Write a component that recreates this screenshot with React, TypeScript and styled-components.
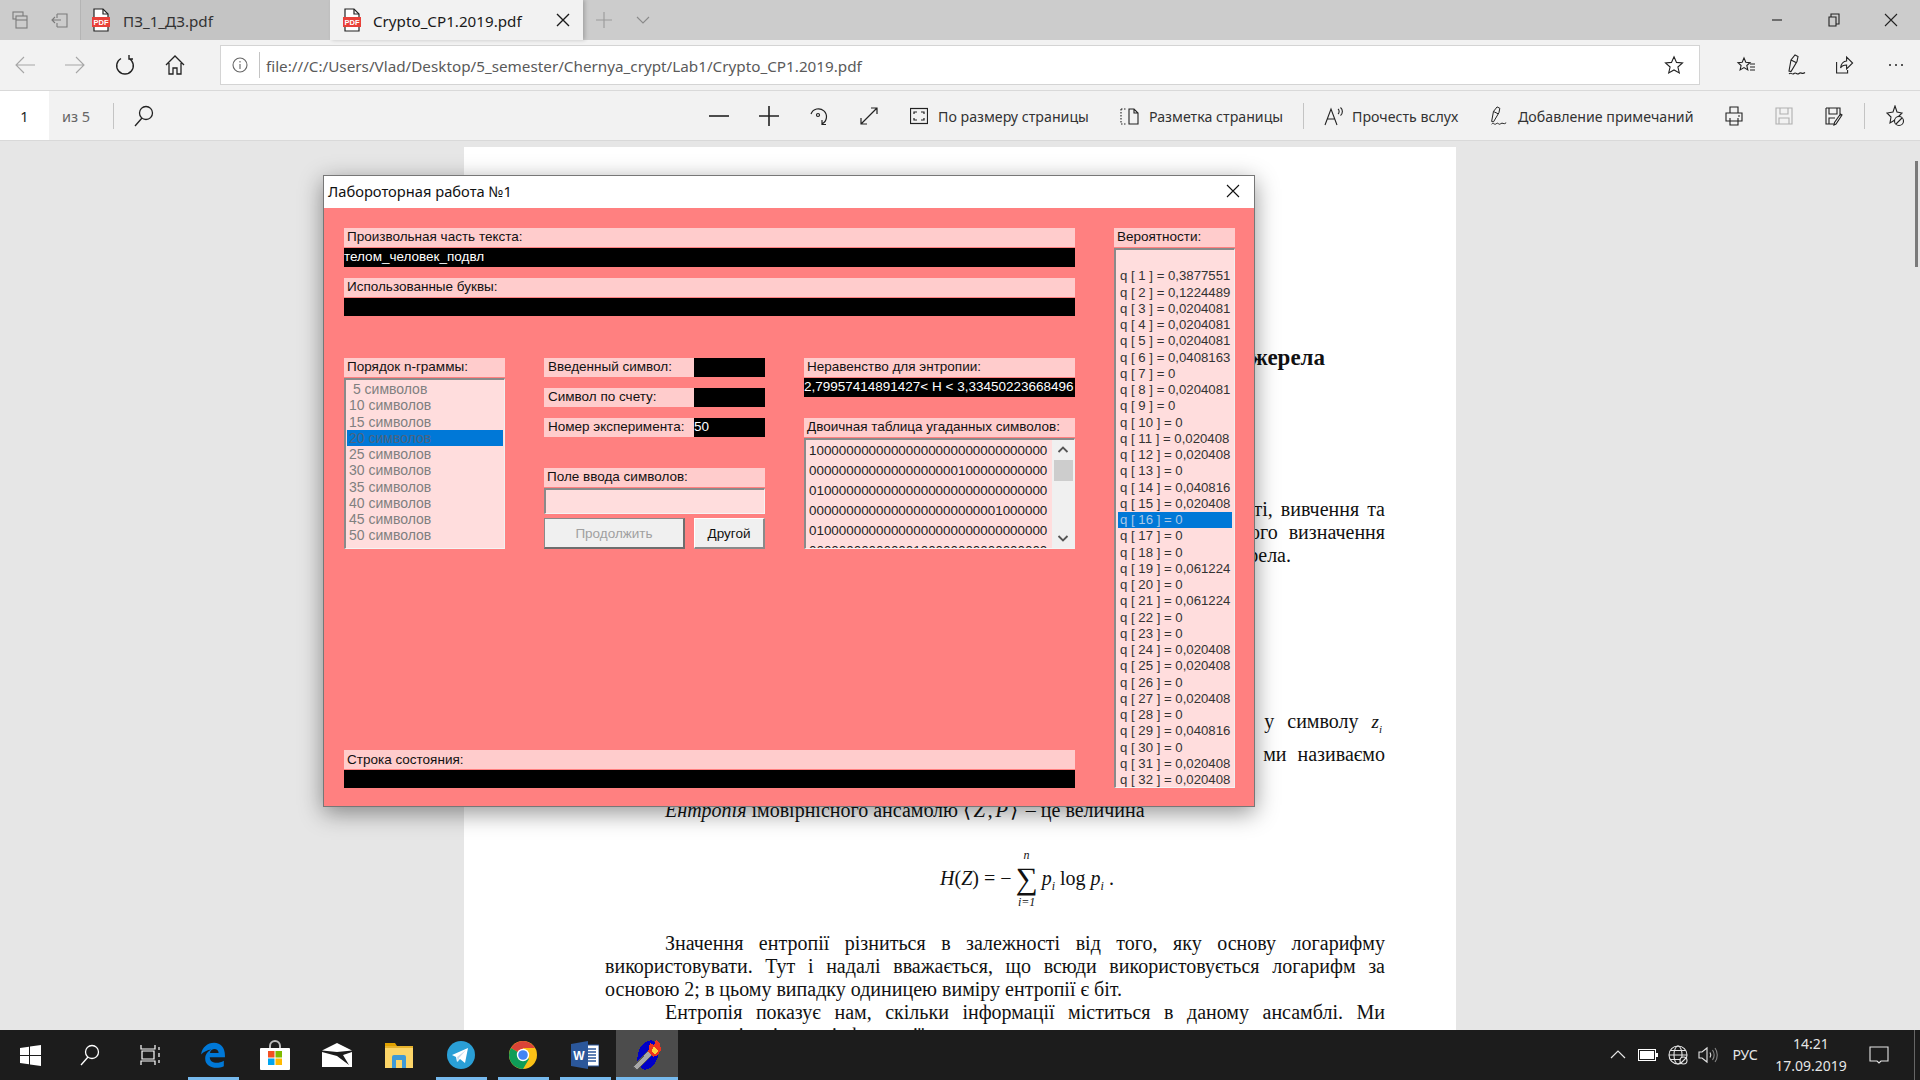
import React from "react";
import styled, { createGlobalStyle } from "styled-components";

const Global = createGlobalStyle`
  html, body { margin: 0; padding: 0; background: #e6e6e6; }
  * { box-sizing: border-box; }
  svg { display: block; }
`;

const ui = `"Noto Sans", "Open Sans", sans-serif`;
const legacy = `"Liberation Sans", Arial, sans-serif`;
const serif = `"Liberation Serif", "Times New Roman", serif`;

const Screen = styled.div`
  width: 1920px; height: 1080px; overflow: hidden;
  display: flex; flex-direction: column;
  font-family: ${ui}; color: #222;
`;

/* ---------- tab strip ---------- */
const TabStrip = styled.div`
  height: 40px; flex: none; display: flex; align-items: stretch; background: #cccccc; color: #444;
`;
const TabTools = styled.div`
  width: 81px; display: flex; padding-left: 0; border-right: 1px solid #b4b4b4;
`;
const Slot = styled.div<{ $w?: number; $ml?: number; $c?: string }>`
  width: ${p => p.$w ?? 50}px; flex: none; margin-left: ${p => p.$ml ?? 0}px;
  display: flex; align-items: center; justify-content: center;
  color: ${p => p.$c ?? "inherit"};
`;
const Tab = styled.div<{ $active?: boolean; $w: number }>`
  width: ${p => p.$w}px; flex: none; display: flex; align-items: center;
  padding-left: ${p => (p.$active ? 12 : 10)}px; gap: ${p => (p.$active ? 11 : 12)}px;
  background: ${p => (p.$active ? "#f2f2f2" : "#c4c4c4")};
  color: ${p => (p.$active ? "#1a1a1a" : "#333")};
  font-size: 15.2px; white-space: nowrap; position: relative;
  box-shadow: ${p => (p.$active ? "2px 0 4px rgba(0,0,0,.2)" : "none")};
`;
const TabName = styled.span<{ $w: number }>`
  width: ${p => p.$w}px; padding-top: 1px;
`;
const WindowControls = styled.div`
  margin-left: auto; display: flex; padding-right: 1px; color: #222;
`;

/* ---------- address row ---------- */
const AddressRow = styled.div`
  height: 51px; flex: none; display: flex; background: #f2f2f2; padding-top: 5px;
  border-bottom: 1px solid #d9d9d9; color: #222;
`;
const NavSlot = styled.div<{ $dim?: boolean; $ml?: number; $w?: number }>`
  width: ${p => p.$w ?? 50}px; height: 39px; flex: none; margin-left: ${p => p.$ml ?? 0}px;
  display: flex; align-items: center; justify-content: center;
  color: ${p => (p.$dim ? "#a6a6a6" : "#222")};
`;
const AddressBar = styled.div`
  width: 1480px; height: 40px; flex: none; margin-left: 20px; background: #fff;
  border: 1px solid #d4d4d4; display: flex; align-items: center;
`;
const InfoSlot = styled.div`
  width: 39px; height: 26px; flex: none; display: flex; align-items: center; justify-content: center;
  border-right: 1px solid #c4c4c4; color: #666; margin-right: 6px;
`;
const UrlText = styled.span`
  font-size: 15.25px; color: #5a5a5a; white-space: nowrap; padding-top: 1px;
`;
const StarSlot = styled.div`
  margin-left: auto; width: 51px; display: flex; justify-content: center; color: #222;
`;

/* ---------- pdf toolbar ---------- */
const PdfBar = styled.div`
  height: 50px; flex: none; display: flex; align-items: stretch; background: #f2f2f2;
  border-bottom: 1px solid #d9d9d9; color: #222;
`;
const PageBox = styled.div`
  width: 49px; background: #fff; display: flex; align-items: center; justify-content: center;
  font-size: 14.5px; color: #222;
`;
const PageCount = styled.div`
  width: 30px; margin-left: 13px; font-size: 14.5px; color: #666; display: flex; align-items: center;
  white-space: nowrap;
`;
const VSep = styled.div<{ $ml: number }>`
  width: 1px; height: 26px; align-self: center; margin-left: ${p => p.$ml}px; background: #c4c4c4; flex: none;
`;
const PdfRight = styled.div`
  margin-left: auto; display: flex; align-items: stretch;
`;
const ToolIcon = styled.div<{ $ml: number }>`
  width: 20px; flex: none; margin-left: ${p => p.$ml}px; display: flex; align-items: center; justify-content: center;
`;
const ToolLabel = styled.div<{ $w: number; $ml?: number }>`
  width: ${p => p.$w}px; margin-left: ${p => p.$ml ?? 8}px; flex: none; display: flex; align-items: center;
  font-size: 14.2px; white-space: nowrap; color: #333; padding-top: 1px;
`;

/* ---------- viewer + page ---------- */
const Viewer = styled.div`
  flex: 1; min-height: 0; position: relative; overflow: hidden; background: #e6e6e6;
`;
const ScrollThumb = styled.div`
  position: absolute; right: 2px; top: 20px; width: 3px; height: 106px; background: #7a7a7a;
`;
const Page = styled.div`
  width: 992px; height: 1000px; margin: 6px 0 0 464px; background: #fff; color: #111;
  font-family: ${serif}; font-size: 20px; line-height: 23px;
  padding: 198px 71px 0 141px;
`;
const Heading = styled.div`
  font-weight: 700; font-size: 23px; line-height: 26px; text-align: right; padding-right: 60px;
`;
const Fragment = styled.div<{ $mt?: number; $pr?: number; $ws?: number }>`
  text-align: right; margin-top: ${p => p.$mt ?? 0}px; padding-right: ${p => p.$pr ?? 0}px;
  word-spacing: ${p => p.$ws ?? 0}px;
  i { font-size: 19px; } sub { font-size: 11px; line-height: 0; }
`;
const Line = styled.div<{ $indent?: boolean; $mt?: number; $last?: boolean }>`
  margin-top: ${p => p.$mt ?? 0}px; padding-left: ${p => (p.$indent ? 60 : 0)}px;
  text-align: justify; text-align-last: ${p => (p.$last ? "left" : "justify")}; white-space: nowrap;
`;
const MathPair = styled.span`
  letter-spacing: 2.4px; font-size: 21px;
`;
const Formula = styled.div`
  height: 70px; margin-top: 21.5px; display: flex; align-items: center; justify-content: center;
  padding-left: 64px; font-size: 20px; gap: 3px; white-space: nowrap;
  i { font-style: italic; } sub { font-size: 12px; line-height: 0; }
`;
const SigmaStack = styled.div`
  display: flex; flex-direction: column; align-items: center; gap: 2px; line-height: 1; margin: 0 1px;
`;
const SigmaLimit = styled.span`
  font-size: 12px; line-height: 12px; font-style: italic;
`;
const Sigma = styled.span`
  font-size: 31px; line-height: 31px;
`;

/* ---------- dialog ---------- */
const Dialog = styled.div`
  position: absolute; left: 323px; top: 34px; width: 932px; height: 632px;
  border: 1px solid #777; background: #ff8080; display: flex; flex-direction: column;
  box-shadow: 0 6px 22px rgba(0,0,0,.42);
  font-family: ${legacy}; font-size: 13.5px;
`;
const TitleBar = styled.div`
  height: 32px; flex: none; background: #fff; display: flex; align-items: center; justify-content: space-between;
  padding: 0 0 2px 4px; font-family: ${ui}; font-size: 14.7px; color: #111;
`;
const CloseSlot = styled.div`
  width: 42px; height: 30px; display: flex; align-items: center; justify-content: center; color: #111;
`;
const DialogBody = styled.div`
  flex: 1; min-height: 0; display: flex; gap: 39px; padding: 20px 19px 18px 20px;
`;
const MainColumn = styled.div`
  width: 731px; flex: none; display: flex; flex-direction: column;
`;
const SideColumn = styled.div`
  width: 121px; flex: none; display: flex; flex-direction: column;
`;
const FieldLabel = styled.div<{ $mt?: number }>`
  height: 19px; flex: none; margin-top: ${p => p.$mt ?? 0}px; background: #ffcccc; color: #111;
  padding-left: 3px; line-height: 18px; white-space: nowrap; overflow: hidden;
`;
const StatusLabel = styled(FieldLabel)`
  line-height: 20px;
`;
const BlackField = styled.div<{ $h?: number }>`
  height: ${p => p.$h ?? 19}px; flex: none; margin-top: 1px; background: #000; color: #fff;
  line-height: 17px; white-space: nowrap; overflow: hidden;
`;
const ColumnsRow = styled.div`
  margin-top: 42px; display: grid; grid-template-columns: 161px 221px 271px; column-gap: 39px; height: 191px;
`;
const Col = styled.div`
  display: flex; flex-direction: column; min-height: 0;
`;
const StatusBlock = styled.div`
  margin-top: auto;
`;
const Inset = styled.div<{ $mt?: number }>`
  flex: 1; min-height: 0; margin-top: ${p => p.$mt ?? 1}px; background: #ffdddd; overflow: hidden;
  border-style: solid; border-width: 2px 1px 1px 2px;
  border-color: #8a8a8a #f0f0f0 #f4f4f4 #8a8a8a;
`;
const NgramInset = styled(Inset)`
  padding: 1px 1px 0 1px; font-size: 14px;
`;
const ProbInset = styled(Inset)`
  padding: 2px 2px 0 2px; font-size: 13.2px;
`;
const ListRow = styled.div<{ $sel?: boolean; $tone: string }>`
  height: 16.25px; line-height: 16px; padding-left: 2px; white-space: pre; overflow: hidden;
  background: ${p => (p.$sel ? "#0078d7" : "transparent")};
  color: ${p => p.$tone};
`;
const FormRow = styled.div<{ $mb?: number }>`
  display: flex; height: 19px; flex: none; margin-bottom: ${p => p.$mb ?? 11}px;
`;
const FormLabel = styled.div`
  flex: 1; background: #ffcccc; color: #111; padding-left: 4px; line-height: 18px; white-space: nowrap;
`;
const FormValue = styled.div`
  width: 71px; flex: none; background: #000; color: #fff; line-height: 17px; font-size: 13.5px;
`;
const CharInput = styled.div`
  height: 26px; flex: none; margin-top: 1px; background: #ffdddd;
  border-style: solid; border-width: 2px 1px 1px 2px; border-color: #8a8a8a #f4f4f4 #f4f4f4 #8a8a8a;
`;
const ButtonRow = styled.div`
  display: flex; justify-content: space-between; margin-top: 4px; height: 31px;
`;
const RaisedButton = styled.div<{ $w: number; $dis?: boolean }>`
  width: ${p => p.$w}px; background: #f0f0f0; display: flex; align-items: center; justify-content: center;
  color: ${p => (p.$dis ? "#a0a0a0" : "#111")};
  border-style: solid; border-width: 1px 2px 2px 1px;
  border-color: ${p => (p.$dis ? "#8a8a8a #6e6e6e #6e6e6e #8a8a8a" : "#fff #8a8a8a #8a8a8a #fff")};
`;
const BinaryBox = styled(Inset)`
  display: flex;
`;
const BinaryRows = styled.div`
  flex: 1; min-width: 0; padding: 1px 0 0 3px; overflow: hidden; color: #222; font-size: 13.4px;
`;
const BinaryRow = styled.div`
  height: 20px; line-height: 20px; white-space: nowrap; overflow: hidden;
`;
const ScrollTrack = styled.div`
  width: 22px; flex: none; background: #f0f0f0; display: flex; flex-direction: column; align-items: center; color: #555;
`;
const ScrollArrow = styled.div`
  height: 20px; flex: none; display: flex; align-items: center; justify-content: center;
`;
const ScrollKnob = styled.div`
  width: 19px; height: 21px; flex: none; background: #cdcdcd;
`;
const ScrollGap = styled.div`
  flex: 1;
`;

/* ---------- taskbar ---------- */
const Taskbar = styled.div`
  height: 50px; flex: none; background: #1c1c1c; display: flex; color: #fff; position: relative; z-index: 1;
`;
const SystemSlot = styled.div`
  width: 60px; flex: none; display: flex; align-items: center; justify-content: center; color: #fff;
`;
const AppSlot = styled.div<{ $open?: boolean; $active?: boolean; $ml?: number }>`
  width: 62px; flex: none; display: flex; align-items: center; justify-content: center; position: relative;
  margin-left: ${p => p.$ml ?? 0}px;
  background: ${p => (p.$active ? "#4c4c4c" : "transparent")};
  &::after {
    content: ""; display: ${p => (p.$open ? "block" : "none")}; position: absolute; bottom: 0; height: 3px;
    left: ${p => (p.$active ? 0 : 6)}px; right: ${p => (p.$active ? 0 : 5)}px; background: #76b9ed;
  }
`;
const Tray = styled.div`
  margin-left: auto; display: flex; align-items: stretch; color: #eee;
`;
const TraySlot = styled.div<{ $w: number }>`
  width: ${p => p.$w}px; flex: none; display: flex; flex-direction: column; align-items: center; justify-content: center;
  font-size: 14px; line-height: 22px; white-space: nowrap; color: #e6e6e6;
`;
const DesktopEdge = styled.div`
  width: 17px; flex: none; margin-left: 0; position: relative;
  &::after { content: ""; position: absolute; left: 11px; top: 0; bottom: 0; width: 1px; background: #666; }
`;

/* ---------- icons ---------- */
type IP = { s?: number; children: React.ReactNode; vb?: string; w?: number; sw?: number; style?: React.CSSProperties };
const Ico = ({ s = 20, w, children, vb = "0 0 20 20", sw = 1.1, style }: IP) => (
  <svg width={w ?? s} height={s} viewBox={vb} fill="none" stroke="currentColor" strokeWidth={sw} style={style}>
    {children}
  </svg>
);
const PdfIcon = () => (
  <svg width="20" height="24" viewBox="0 0 20 24">
    <path d="M3 1h9l5 5v17H3z" fill="#fff" stroke="#222" strokeWidth="1.2" />
    <path d="M12 1v5h5" fill="none" stroke="#222" strokeWidth="1.2" />
    <rect x="1" y="9" width="18" height="10" fill="#e8413a" />
    <text x="10" y="17" fontSize="7.5" fontFamily="Liberation Sans" fontWeight="700" fill="#fff" textAnchor="middle">PDF</text>
  </svg>
);
const StarPath = "M10 1.8l2.5 5.6 6 .6-4.6 4 1.4 6L10 15l-5.3 3 1.4-6-4.6-4 6-.6z";
const PenPath = "M4 17l2-11 4-5 3 1.500-1 5-6 10zM6 6l5 2.500M4 20c2-2.500 3 1.500 5-.5s3 2 5 0 3 1.500 6-1";

const EdgeIcon = () => (
  <svg width="26" height="26" viewBox="0 0 24 24">
    <path fillRule="evenodd" fill="#0078d7" d="M1 11.5C2 5 7 .8 13 .8c6.500 0 10.500 5 10 13.200H9c.2 5.500 7 6.800 13 3.300v5C15 25.500 4.500 23.500 4.800 15c.1-3.500 2.500-6.500 5.700-8C6.500 7.500 3.500 9 1 11.500zM9.200 10.200h8c0-5-7.400-5-8 0z" />
  </svg>
);
const StoreIcon = () => (
  <svg width="30" height="30" viewBox="0 0 30 30">
    <path d="M10 9V6a5 5 0 0 1 10 0v3" fill="none" stroke="#bbb" strokeWidth="2" />
    <rect x="0" y="8" width="30" height="22" rx="1" fill="#fff" />
    <rect x="8" y="11" width="6.500" height="6.500" fill="#f25022" />
    <rect x="15.500" y="11" width="6.500" height="6.500" fill="#7fba00" />
    <rect x="8" y="18.500" width="6.500" height="6.500" fill="#00a4ef" />
    <rect x="15.500" y="18.500" width="6.500" height="6.500" fill="#ffb900" />
  </svg>
);
const MailIcon = () => (
  <svg width="30" height="24" viewBox="0 0 30 24">
    <path d="M0 7.500L15 0l15 7.500L15 9z" fill="#fff" />
    <path d="M0 9v15h30V9L21 12l6 10-12-9z" fill="#fff" />
  </svg>
);
const FolderIcon = () => (
  <svg width="28" height="26" viewBox="0 0 28 26">
    <path d="M0 1h10l2 3h16v22H0z" fill="#e0a100" />
    <rect x="0" y="4" width="28" height="22" fill="#fcd568" />
    <rect x="0" y="4" width="28" height="2" fill="#e8b32c" />
    <path d="M7 26V15a2 2 0 0 1 2-2h10a2 2 0 0 1 2 2v11h-4v-8h-6v8z" fill="#3f9ad6" />
  </svg>
);
const TelegramIcon = () => (
  <svg width="28" height="28" viewBox="0 0 28 28">
    <circle cx="14" cy="14" r="14" fill="#2a9fd6" />
    <path d="M5 14l16-7-3 15-5-4-3 3-1-5z" fill="#fff" />
    <path d="M10 16l9-7-7 8-1 4z" fill="#c8daea" />
  </svg>
);
const ChromeIcon = () => (
  <svg width="28" height="28" viewBox="0 0 28 28">
    <circle cx="14" cy="14" r="14" fill="#fbc116" />
    <path d="M14 14L1.900 7A14 14 0 0 1 26.100 7H14z" fill="#db4437" />
    <path d="M14 14L1.900 7A14 14 0 0 0 14 28l6-10z" fill="#0f9d58" />
    <circle cx="14" cy="14" r="6.200" fill="#fff" />
    <circle cx="14" cy="14" r="4.800" fill="#4285f4" />
  </svg>
);
const WordIcon = () => (
  <svg width="28" height="28" viewBox="0 0 28 28">
    <rect x="13" y="4" width="15" height="21" fill="#fff" stroke="#2b579a" strokeWidth="1" />
    <path d="M17 8h8M17 11h8M17 14h8M17 17h8M17 20h8" stroke="#2b579a" strokeWidth="1.400" />
    <path d="M0 3l17-3v28L0 25z" fill="#2b579a" />
    <text x="8" y="19" fontSize="12" fontWeight="700" fontFamily="Liberation Sans" fill="#fff" textAnchor="middle">W</text>
  </svg>
);
const TorchIcon = () => (
  <svg width="30" height="32" viewBox="0 0 30 32" shapeRendering="crispEdges">
    <ellipse cx="16" cy="16" rx="10" ry="15" transform="rotate(18 16 16)" fill="#0000c8" />
    <path d="M1 28l15-16 4 4L5 31z" fill="#a8a8a8" stroke="#555" strokeWidth="1" />
    <path d="M16 13l2-9 4 2 2-5 4 3 1 7-3 5-5 2z" fill="#f0341d" />
    <path d="M20 12l1-4 3 1 2 3-3 4z" fill="#ffd23a" />
  </svg>
);

const probs = ["0,3877551","0,1224489","0,0204081","0,0204081","0,0204081","0,0408163","0","0,0204081","0","0","0,020408","0,020408","0","0,040816","0,020408","0","0","0","0,061224","0","0,061224","0","0","0,020408","0,020408","0","0,020408","0","0,040816","0","0,020408","0,020408"];
const grams = [" 5 символов","10 символов","15 символов","20 символов","25 символов","30 символов","35 символов","40 символов","45 символов","50 символов"];
const binary = [
  "10000000000000000000000000000000",
  "00000000000000000000100000000000",
  "01000000000000000000000000000000",
  "00000000000000000000000001000000",
  "01000000000000000000000000000000",
  "00000000000000100000000000000000",
];

export default function App() {
  return (
    <Screen>
      <Global />
      <TabStrip>
        <TabTools>
          <Slot $w={40} $c="#7a7a7a"><Ico s={20}><rect x="3" y="2" width="10" height="7" /><rect x="6" y="6" width="11" height="12" fill="#ccc" /><path d="M6 10h11" /></Ico></Slot>
          <Slot $w={40} $c="#7a7a7a"><Ico s={20}><path d="M7 4h10v13H7M2 10h9M5 7l-3 3 3 3M7 4v4M7 13v4" /></Ico></Slot>
        </TabTools>
        <Tab $w={249}><PdfIcon /><TabName $w={100}>ПЗ_1_ДЗ.pdf</TabName></Tab>
        <Tab $active $w={253}>
          <PdfIcon /><TabName $w={171}>Crypto_CP1.2019.pdf</TabName>
          <Ico s={16} vb="0 0 16 16" sw={1.4}><path d="M2 2l12 12M14 2L2 14" /></Ico>
        </Tab>
        <Slot $w={40} $ml={1} $c="#9a9a9a"><Ico s={18} vb="0 0 18 18"><path d="M9 1v16M1 9h16" /></Ico></Slot>
        <Slot $w={38} $c="#8a8a8a"><Ico s={14} vb="0 0 14 14"><path d="M1 4l6 6 6-6" /></Ico></Slot>
        <WindowControls>
          <Slot $w={57}><Ico s={12} vb="0 0 12 12"><path d="M1 6h10" /></Ico></Slot>
          <Slot $w={57}><Ico s={14} vb="0 0 14 14"><path d="M4 4V1h8v10h-3M2 4h7v9H2z" /></Ico></Slot>
          <Slot $w={57}><Ico s={14} vb="0 0 14 14"><path d="M1 1l12 12M13 1L1 13" /></Ico></Slot>
        </WindowControls>
      </TabStrip>

      <AddressRow>
        <NavSlot $dim><Ico s={22} vb="0 0 22 22"><path d="M21 11H2M10 3l-8 8 8 8" /></Ico></NavSlot>
        <NavSlot $dim><Ico s={22} vb="0 0 22 22"><path d="M1 11h19M12 3l8 8-8 8" /></Ico></NavSlot>
        <NavSlot><Ico s={22} vb="0 0 22 22" sw={1.4}><path d="M15 4.500a8.300 8.300 0 1 1-8 0M7 1v4H3" transform="matrix(-1 0 0 1 22 0)" /></Ico></NavSlot>
        <NavSlot><Ico s={22} vb="0 0 22 22" sw={1.3}><path d="M2 11l9-9 9 9M5 9v11h4v-6h4v6h4V9" /></Ico></NavSlot>
        <AddressBar>
          <InfoSlot><Ico s={16} vb="0 0 16 16"><circle cx="8" cy="8" r="7" /><path d="M8 7v5M8 4v1.500" /></Ico></InfoSlot>
          <UrlText>file:///C:/Users/Vlad/Desktop/5_semester/Chernya_crypt/Lab1/Crypto_CP1.2019.pdf</UrlText>
          <StarSlot><Ico s={20}><path d={StarPath} /></Ico></StarSlot>
        </AddressBar>
        <NavSlot $ml={21}><Ico s={20}><path d="M8 3l1.800 4.200 4.200.4-3.200 2.900 1 4.400L8 12.600l-3.900 2.300 1-4.400L2 7.600l4.200-.4zM14 9h5M14 12h5M14 15h5" /></Ico></NavSlot>
        <NavSlot><Ico s={22} vb="0 0 22 22"><path d={PenPath} /></Ico></NavSlot>
        <NavSlot><Ico s={20} vb="2.400 0 20 20"><path d="M3 7v11h11v-3M7 13c0-4 3-7 6-7V2l6 6-6 6v-4c-3 0-5 1-6 3z" /></Ico></NavSlot>
        <NavSlot $w={49}><svg width="16" height="4" viewBox="0 0 16 4" fill="#222"><circle cx="2" cy="2" r="1" /><circle cx="8" cy="2" r="1" /><circle cx="14" cy="2" r="1" /></svg></NavSlot>
      </AddressRow>

      <PdfBar>
        <PageBox>1</PageBox>
        <PageCount>из 5</PageCount>
        <VSep $ml={21} />
        <Slot $w={50} $ml={5}><Ico s={22} vb="0 0 22 22" sw={1.3}><circle cx="13" cy="8" r="6.500" /><path d="M9 13l-7 8" /></Ico></Slot>
        <PdfRight>
          <Slot><Ico s={20} sw={1.6}><path d="M0 10h20" /></Ico></Slot>
          <Slot><Ico s={20} sw={1.6}><path d="M0 10h20M10 0v20" /></Ico></Slot>
          <Slot><Ico s={22} vb="0 0 22 22" sw={1.2}><path d="M3 9a8 8 0 1 1 11 10M14 15v4.500h4" /><circle cx="10" cy="10" r="1.500" /></Ico></Slot>
          <Slot><Ico s={20} sw={1.2}><path d="M2 18L18 2M12 2h6v6M2 12v6h6" /></Ico></Slot>
          <ToolIcon $ml={15}><Ico s={18} vb="0 0 18 18" sw={1.2}><rect x="0.500" y="1.500" width="17" height="15" /><path d="M4 7V5h3M14 7V5h-3M4 11v2h3M14 11v2h-3" /></Ico></ToolIcon>
          <ToolLabel $w={151} $ml={9}>По размеру страницы</ToolLabel>
          <ToolIcon $ml={31}><Ico s={20}><path d="M1 3v15" strokeDasharray="1.500 1.500" /><path d="M1 3h6M1 18h6" strokeDasharray="1.500 1.500" /><path d="M9 3h5l4 4v11H9zM14 3v4h4" /></Ico></ToolIcon>
          <ToolLabel $w={132} $ml={9}>Разметка страницы</ToolLabel>
          <VSep $ml={22} />
          <ToolIcon $ml={20}><Ico s={20}><path d="M1 19l6-16 6 16M3.500 13h7M14 3c1.500 1 1.500 4 0 5M16.500 1.500c2.500 2 2.500 6 0 8" /></Ico></ToolIcon>
          <ToolLabel $w={106}>Прочесть вслух</ToolLabel>
          <ToolIcon $ml={30}><Ico s={22} vb="0 0 22 22"><path d={PenPath} /></Ico></ToolIcon>
          <ToolLabel $w={175} $ml={10}>Добавление примечаний</ToolLabel>
          <Slot $ml={16}><Ico s={20}><path d="M6 7V1h8v6M2 7h16v8H2zM6 12v7h8v-7M14 10h2" /></Ico></Slot>
          <Slot $c="#b0b0b0"><Ico s={20}><path d="M2 2h16v16H2zM6 2v6h8V2M5 18v-6h10v6" /></Ico></Slot>
          <Slot><Ico s={20}><path d="M2 2h14v8M2 2v16h8M5 2v6h8V2M5 18v-6h6M18 9l-6 9-2 1 .5-2.500 6-8.500z" /></Ico></Slot>
          <VSep $ml={5} />
          <Slot $ml={5}><Ico s={22} vb="0 0 22 22"><path d="M11 1l2 6 5 1-4 4 1 6-4-3-5 3 1-6-4-4 6-1z" /><circle cx="15" cy="16" r="4.500" fill="#f2f2f2" /><path d="M12 19l6-6" /></Ico></Slot>
        </PdfRight>
      </PdfBar>

      <Viewer>
        <Page>
          <Heading>джерела</Heading>
          <Fragment $mt={127} $ws={3}>ті, вивчення та</Fragment>
          <Fragment $ws={6}>ого визначення</Fragment>
          <Fragment $pr={94}>рела.</Fragment>
          <Fragment $mt={143} $pr={3} $ws={8}>у символу <i>z<sub>i</sub></i></Fragment>
          <Fragment $mt={10} $ws={6}>ми називаємо</Fragment>
          <Line $indent $mt={33} $last><i>Ентропія</i> імовірнісного ансамблю <MathPair>⟨<i>Z</i>,<i>P</i>⟩</MathPair> – це величина</Line>
          <Formula>
            <span><i>H</i>(<i>Z</i>) = −</span>
            <SigmaStack><SigmaLimit>n</SigmaLimit><Sigma>∑</Sigma><SigmaLimit>i=1</SigmaLimit></SigmaStack>
            <span><i>p<sub>i</sub></i> log <i>p<sub>i</sub></i> .</span>
          </Formula>
          <Line $indent $mt={18.5}>Значення ентропії різниться в залежності від того, яку основу логарифму</Line>
          <Line>використовувати. Тут і надалі вважається, що всюди використовується логарифм за</Line>
          <Line $last>основою 2; в цьому випадку одиницею виміру ентропії є біт.</Line>
          <Line $indent>Ентропія показує нам, скільки інформації міститься в даному ансамблі. Ми</Line>
          <Line>визначаємо кількість інформації, що припадає на один символ джерела</Line>
        </Page>
        <ScrollThumb />

        <Dialog>
          <TitleBar>
            Лабороторная работа №1
            <CloseSlot><Ico s={14} vb="0 0 14 14"><path d="M1 1l12 12M13 1L1 13" /></Ico></CloseSlot>
          </TitleBar>
          <DialogBody>
            <MainColumn>
              <FieldLabel>Произвольная часть текста:</FieldLabel>
              <BlackField>телом_человек_подвл</BlackField>
              <FieldLabel $mt={11}>Использованные буквы:</FieldLabel>
              <BlackField $h={18} />
              <ColumnsRow>
                <Col>
                  <FieldLabel>Порядок n-граммы:</FieldLabel>
                  <NgramInset>
                    {grams.map((g, i) => <ListRow key={g} $sel={i === 3} $tone={i === 3 ? "#4d6480" : "#808080"}>{g}</ListRow>)}
                  </NgramInset>
                </Col>
                <Col>
                  <FormRow><FormLabel>Введенный символ:</FormLabel><FormValue /></FormRow>
                  <FormRow><FormLabel>Символ по счету:</FormLabel><FormValue /></FormRow>
                  <FormRow $mb={31}><FormLabel>Номер эксперимента:</FormLabel><FormValue>50</FormValue></FormRow>
                  <FieldLabel>Поле ввода символов:</FieldLabel>
                  <CharInput />
                  <ButtonRow>
                    <RaisedButton $w={141} $dis>Продолжить</RaisedButton>
                    <RaisedButton $w={71}>Другой</RaisedButton>
                  </ButtonRow>
                </Col>
                <Col>
                  <FieldLabel>Неравенство для энтропии:</FieldLabel>
                  <BlackField>2,79957414891427&lt; H &lt; 3,33450223668496</BlackField>
                  <FieldLabel $mt={21}>Двоичная таблица угаданных символов:</FieldLabel>
                  <BinaryBox>
                    <BinaryRows>{binary.map((b, i) => <BinaryRow key={i}>{b}</BinaryRow>)}</BinaryRows>
                    <ScrollTrack>
                      <ScrollArrow><Ico s={12} vb="0 0 12 12" sw={1.8}><path d="M1.500 8L6 3.500 10.500 8" /></Ico></ScrollArrow>
                      <ScrollKnob />
                      <ScrollGap />
                      <ScrollArrow><Ico s={12} vb="0 0 12 12" sw={1.8}><path d="M1.500 4L6 8.500 10.500 4" /></Ico></ScrollArrow>
                    </ScrollTrack>
                  </BinaryBox>
                </Col>
              </ColumnsRow>
              <StatusBlock>
                <StatusLabel>Строка состояния:</StatusLabel>
                <BlackField $h={18} />
              </StatusBlock>
            </MainColumn>
            <SideColumn>
              <FieldLabel>Вероятности:</FieldLabel>
              <ProbInset>
                <ListRow $tone="#333"> </ListRow>
                {probs.map((v, i) => (
                  <ListRow key={i} $sel={i === 15} $tone={i === 15 ? "#a9c8e8" : "#333"}>{`q [ ${i + 1} ] = ${v}`}</ListRow>
                ))}
              </ProbInset>
            </SideColumn>
          </DialogBody>
        </Dialog>
      </Viewer>

      <Taskbar>
        <SystemSlot><svg width="21" height="21" viewBox="0 0 21 21" fill="#fff"><path d="M0 3l9-1.300V10H0zM10 1.500L21 0v10H10zM0 11h9v8.300L0 18zM10 11h11v10l-11-1.500z" /></svg></SystemSlot>
        <SystemSlot><Ico s={22} vb="0 0 22 22" sw={1.3}><circle cx="13" cy="8" r="6.500" /><path d="M9 13l-7 8" /></Ico></SystemSlot>
        <SystemSlot><Ico s={22} vb="0 0 22 22" sw={1.2}><path d="M2 1v4h14V1M2 21v-4h14v4M3 7h12v8H3zM20 3v3M20 9v4M20 16v3" /></Ico></SystemSlot>
        <AppSlot $open $ml={2}><EdgeIcon /></AppSlot>
        <AppSlot><StoreIcon /></AppSlot>
        <AppSlot><MailIcon /></AppSlot>
        <AppSlot><FolderIcon /></AppSlot>
        <AppSlot $open><TelegramIcon /></AppSlot>
        <AppSlot $open><ChromeIcon /></AppSlot>
        <AppSlot $open><WordIcon /></AppSlot>
        <AppSlot $open $active><TorchIcon /></AppSlot>
        <Tray>
          <TraySlot $w={30}><Ico s={16} vb="0 0 16 16" sw={1.2}><path d="M1 11l7-7 7 7" /></Ico></TraySlot>
          <TraySlot $w={30}><svg width="20" height="12" viewBox="0 0 20 12"><rect x="0.500" y="0.500" width="17" height="11" fill="none" stroke="#fff" /><rect x="2" y="2" width="14" height="8" fill="#fff" /><rect x="18" y="4" width="2" height="4" fill="#fff" /></svg></TraySlot>
          <TraySlot $w={30}><Ico s={20}><circle cx="10" cy="10" r="9" /><ellipse cx="10" cy="10" rx="4" ry="9" /><path d="M1 10h18M2.500 5.500h15M2.500 14.500h15" /><circle cx="15.500" cy="15.500" r="3.500" fill="#1c1c1c" /><path d="M13 18l5-5" /></Ico></TraySlot>
          <TraySlot $w={30}><Ico s={20}><path d="M1 7h3l5-4v14l-5-4H1zM12 7.500c1 1.500 1 3.500 0 5" /><path d="M14.500 5c2 3 2 7 0 10M17 3c3 4 3 10 0 14" stroke="#888" /></Ico></TraySlot>
          <TraySlot $w={44}>РУС</TraySlot>
          <TraySlot $w={88}><span>14:21</span><span>17.09.2019</span></TraySlot>
          <TraySlot $w={48}><Ico s={20}><path d="M1 2h18v14h-7l-2 2-2-2H1z" /></Ico></TraySlot>
          <DesktopEdge />
        </Tray>
      </Taskbar>
    </Screen>
  );
}
